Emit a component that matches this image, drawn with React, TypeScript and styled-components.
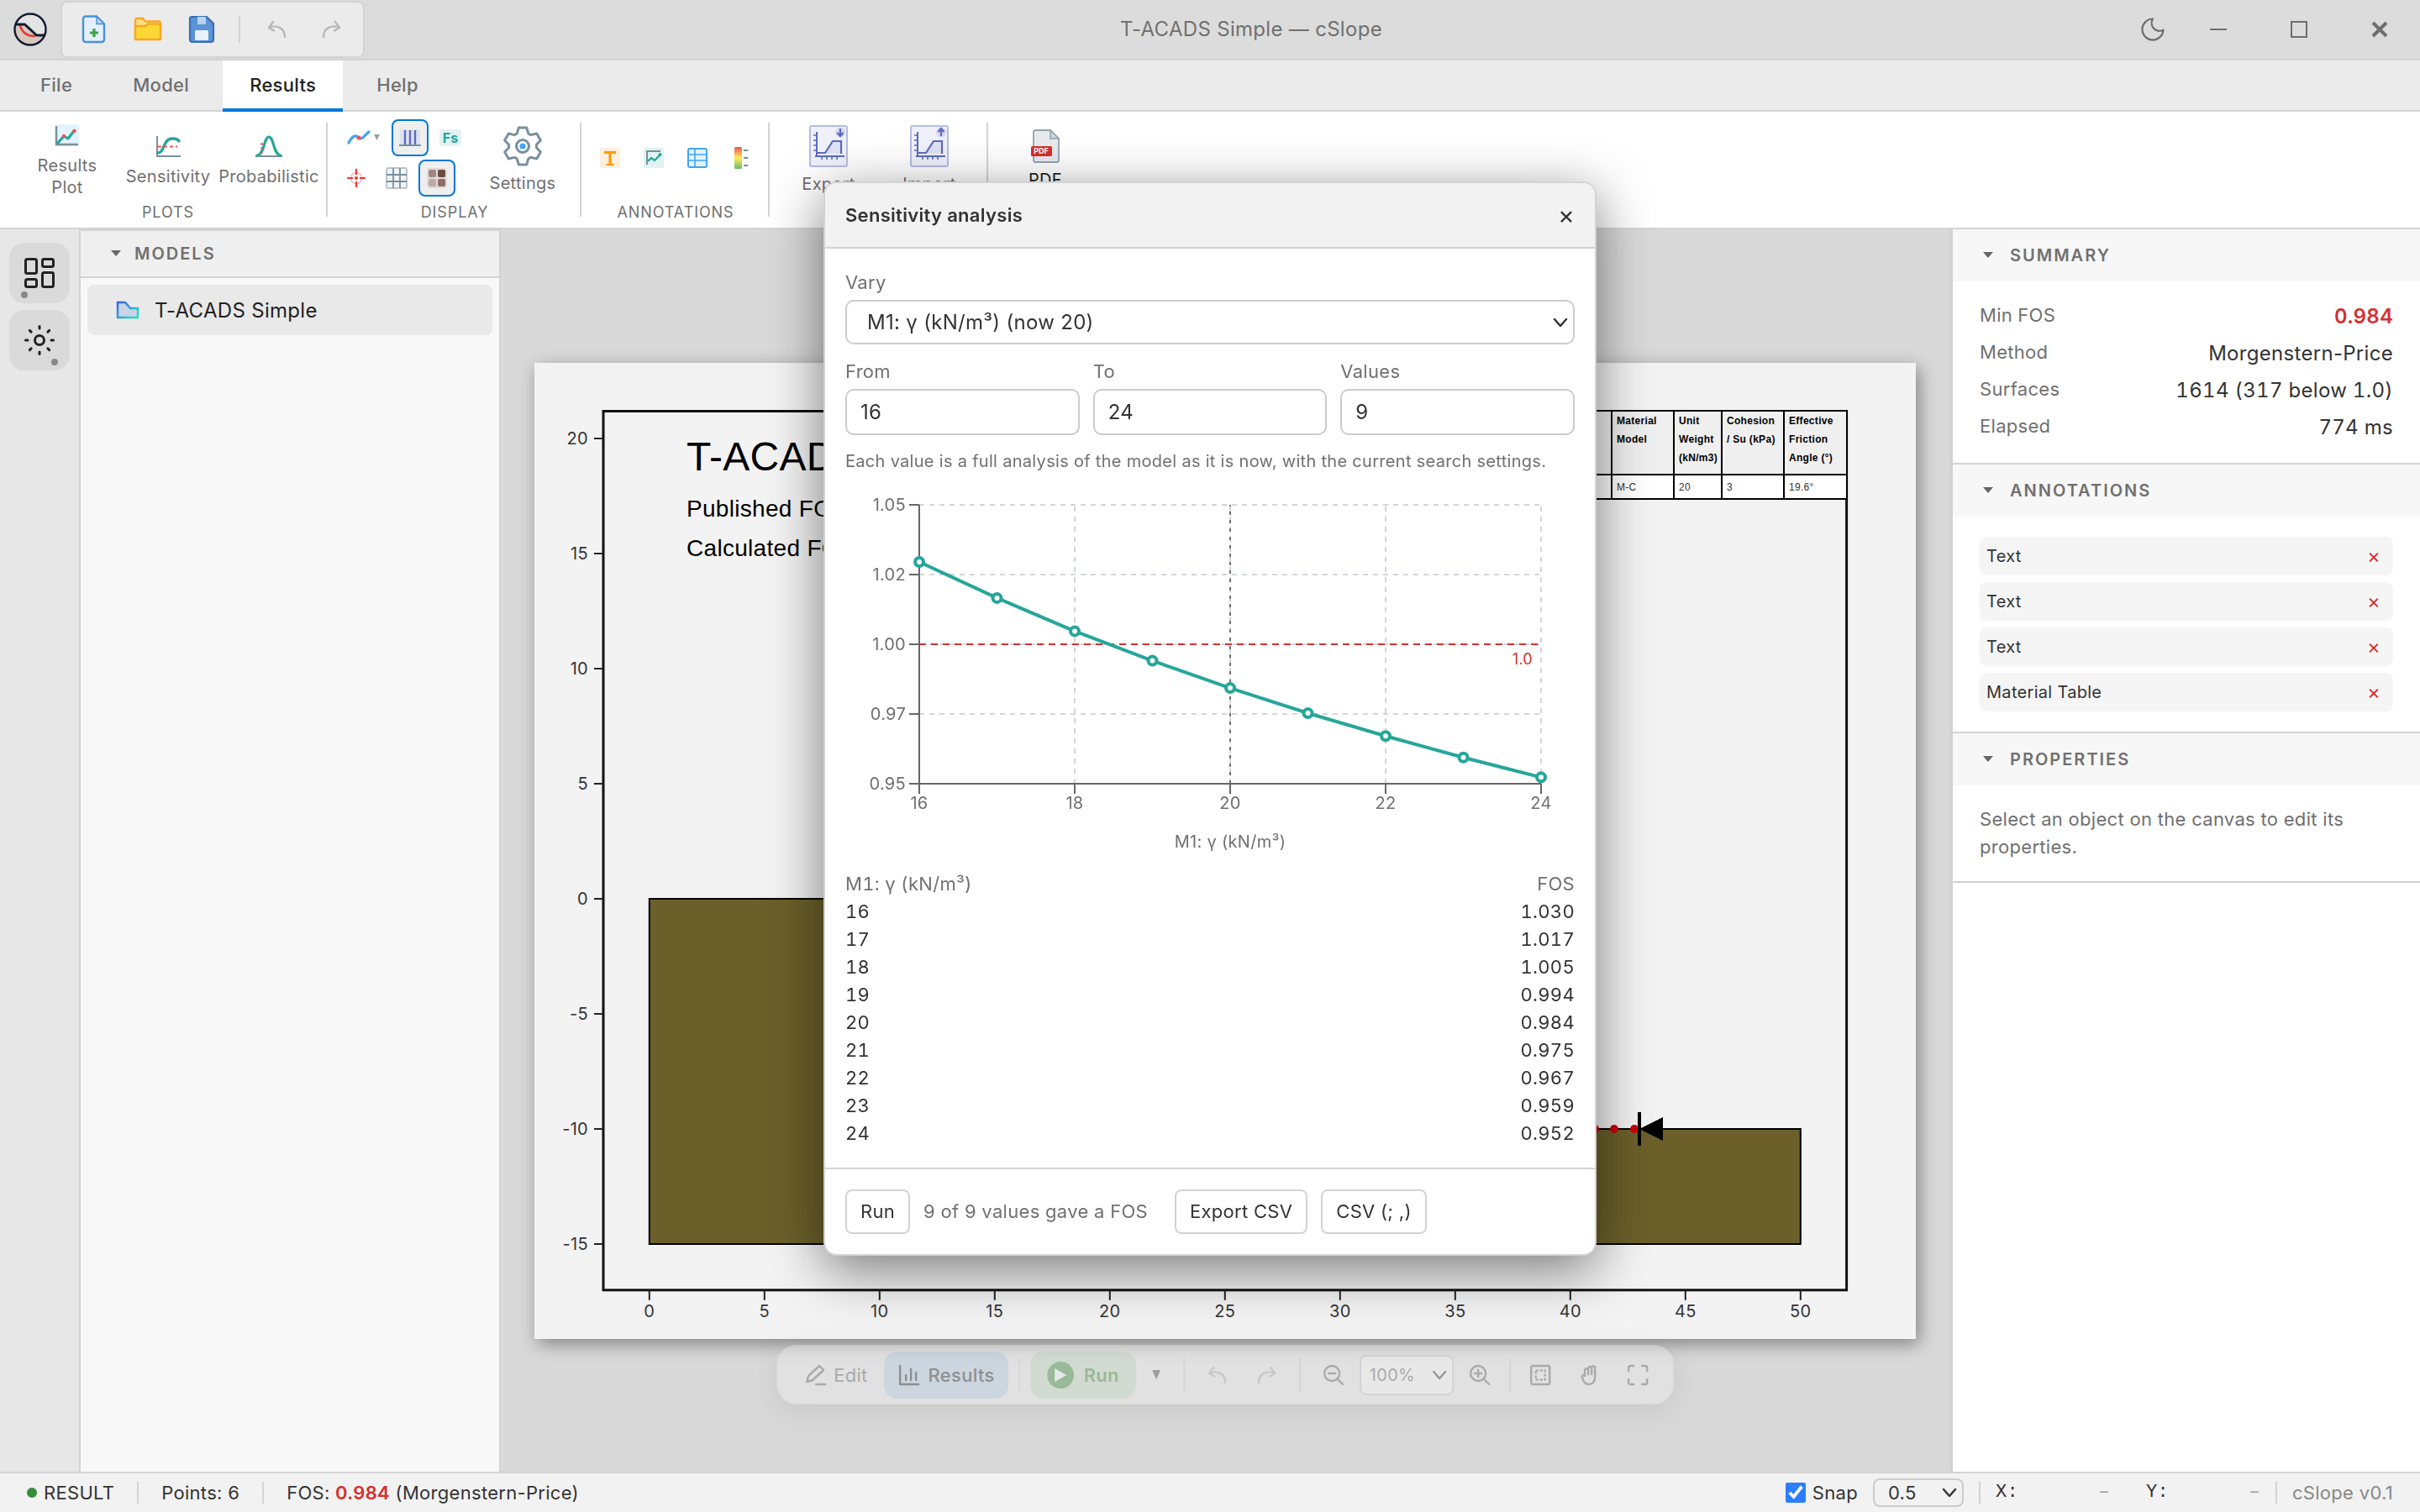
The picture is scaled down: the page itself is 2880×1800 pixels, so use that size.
import React, { ReactNode } from 'react';
import styled, { createGlobalStyle, css } from 'styled-components';

const c = {
  line: '#d3d3d3',
  text: '#333333',
  strong: '#222222',
  muted: '#707070',
  accent: '#0078d7',
  danger: '#d32f2f',
  teal: '#26a69a',
  indigo: '#5c6bc0',
  slate: '#78909c',
};

const GlobalStyle = createGlobalStyle`
  *, *::before, *::after { box-sizing: border-box; }
  body {
    margin: 0;
    font-family: Inter, "Noto Sans", sans-serif;
    font-size: 30px;
    letter-spacing: 0.01em;
    color: ${c.text};
    background: #d9d9d9;
  }
  button, input, select { font: inherit; letter-spacing: inherit; color: inherit; }
  button { padding: 0; border: 0; background: none; cursor: pointer; }
  svg { display: block; flex: none; }
  h1, h2, p, dl, dd, dt, ul { margin: 0; padding: 0; font-weight: 400; }
`;

const Page = styled.div`
  display: flex;
  flex-direction: column;
  min-height: 100vh;
`;

/* ---------- title bar ---------- */

const TitleBar = styled.header`
  display: flex;
  align-items: center;
  height: 72px;
  background: #dcdcdc;
  border-bottom: 2px solid ${c.line};
`;

const TitleLeft = styled.div`
  display: flex;
  align-items: center;
  gap: 16px;
  padding-left: 16px;
`;

const QuickBar = styled.div`
  display: flex;
  align-items: center;
  gap: 4px;
  height: 68px;
  padding: 0 8px;
  background: #ebebeb;
  border: 2px solid ${c.line};
  border-radius: 8px;
`;

const QuickButton = styled.button`
  display: grid;
  place-items: center;
  width: 60px;
  height: 56px;
  &:disabled { color: #b8b8b8; cursor: default; }
`;

const QuickDivider = styled.span`
  width: 2px;
  height: 32px;
  margin: 0 10px;
  background: ${c.line};
`;

const Title = styled.h1`
  flex: 1;
  font-size: 24px;
  line-height: 36px;
  text-align: center;
  color: ${c.muted};
`;

const WindowButtons = styled.div`
  display: flex;
  color: #6e6e6e;
`;

const WindowButton = styled.button<{ $narrow?: boolean }>`
  display: grid;
  place-items: center;
  width: 96px;
  height: 70px;
  ${(p) => p.$narrow && 'width: 36px; margin-right: 12px;'}
`;

/* ---------- menu tabs ---------- */

const Tabs = styled.nav`
  display: flex;
  gap: 8px;
  height: 61px;
  padding-left: 16px;
  background: #ebebeb;
  border-bottom: 2px solid ${c.line};
`;

const Tab = styled.button<{ $active?: boolean }>`
  height: 61px;
  padding: 0 32px;
  font-size: 22px;
  font-weight: 500;
  color: ${c.muted};
  border-bottom: 4px solid transparent;
  ${(p) =>
    p.$active &&
    css`
      color: ${c.strong};
      background: #ffffff;
      border-bottom-color: ${c.accent};
    `}
`;

/* ---------- ribbon ---------- */

const Ribbon = styled.div`
  display: flex;
  align-items: center;
  height: 140px;
  padding-left: 10px;
  background: #ffffff;
  border-bottom: 2px solid ${c.line};
`;

const RibbonGroup = styled.section`
  display: flex;
  flex-direction: column;
  height: 138px;
  padding: 8px 10px 5px 12px;
`;

const RibbonBody = styled.div<{ $gap?: number }>`
  display: flex;
  flex: 1;
  align-items: center;
  gap: ${(p) => p.$gap ?? 4}px;
`;

const RibbonLabel = styled.div`
  height: 27px;
  font-size: 18px;
  line-height: 27px;
  letter-spacing: 0.05em;
  text-align: center;
  color: ${c.muted};
`;

const RibbonDivider = styled.span`
  width: 2px;
  height: 112px;
  background: ${c.line};
`;

const RibbonButton = styled.button<{ $dark?: boolean }>`
  display: flex;
  flex-direction: column;
  align-items: center;
  gap: 7px;
  width: ${(p) => (p.$dark ? 112 : 116)}px;
  font-size: 20px;
  line-height: 26px;
  color: ${(p) => (p.$dark ? c.strong : c.muted)};
`;

const ButtonText = styled.span<{ $wrap?: boolean }>`
  ${(p) => p.$wrap && 'width: 80px;'}
`;

const ToggleRows = styled.div`
  display: flex;
  flex-direction: column;
  gap: 4px;
  padding-bottom: 4px;
`;

const ToggleRow = styled.div<{ $loose?: boolean }>`
  display: flex;
  gap: ${(p) => (p.$loose ? 8 : 4)}px;
`;

const ToolButton = styled.button<{ $active?: boolean; $wide?: boolean }>`
  display: flex;
  align-items: center;
  justify-content: center;
  gap: 4px;
  width: ${(p) => (p.$wide ? 60 : 44)}px;
  height: 44px;
  border: 2px solid transparent;
  border-radius: 8px;
  ${(p) =>
    p.$active &&
    css`
      background: #efefef;
      border-color: ${c.accent};
    `}
`;

/* ---------- body ---------- */

const Workspace = styled.div`
  display: flex;
  flex: 1;
`;

const Rail = styled.aside`
  display: flex;
  flex-direction: column;
  align-items: center;
  gap: 8px;
  width: 96px;
  padding-top: 16px;
  background: #e7e7e7;
  border-right: 2px solid ${c.line};
`;

const RailButton = styled.button<{ $dot: 'left' | 'right' }>`
  position: relative;
  display: grid;
  place-items: center;
  width: 72px;
  height: 72px;
  color: ${c.strong};
  background: #dadada;
  border-radius: 18px;
  &::after {
    content: '';
    position: absolute;
    bottom: 6px;
    ${(p) => p.$dot}: 14px;
    width: 8px;
    height: 8px;
    border-radius: 50%;
    background: #888888;
  }
`;

const ModelsPanel = styled.aside`
  width: 500px;
  background: #f8f8f8;
  border-top: 2px solid ${c.line};
  border-right: 2px solid ${c.line};
`;

const ModelsHeader = styled.button`
  display: flex;
  align-items: center;
  gap: 12px;
  width: 100%;
  padding: 12px 32px;
  font-size: 20px;
  font-weight: 600;
  line-height: 30px;
  letter-spacing: 2px;
  color: ${c.muted};
  background: #efefef;
  border-bottom: 2px solid ${c.line};
`;

const ModelsList = styled.ul`
  padding: 8px;
  list-style: none;
`;

const ModelItem = styled.button`
  display: flex;
  align-items: center;
  gap: 18px;
  width: 100%;
  height: 60px;
  padding: 0 34px;
  font-size: 24px;
  color: ${c.strong};
  background: #e9e9e9;
  border-radius: 8px;
`;

const CanvasArea = styled.main`
  position: relative;
  display: flex;
  flex: 1;
  align-items: center;
  min-width: 0;
  padding: 0 40px;
  background: #d9d9d9;
`;

const Sheet = styled.div`
  flex: 1;
  background: #f3f3f3;
  box-shadow: 4px 6px 20px rgba(0, 0, 0, 0.4);
  svg { width: 100%; height: auto; }
`;

const AxisText = styled.text`
  font-size: 20px;
  fill: #333333;
`;

const Note = styled.text<{ $large?: boolean }>`
  font-family: 'Liberation Sans', Arial, sans-serif;
  font-size: ${(p) => (p.$large ? 48 : 28)}px;
  fill: #000000;
`;

const MaterialTable = styled.table`
  width: 100%;
  border-collapse: collapse;
  table-layout: fixed;
  font-family: 'Liberation Sans', Arial, sans-serif;
  font-size: 12px;
  line-height: 22px;
  th, td { padding: 0 5px; border: 2px solid #000000; text-align: left; vertical-align: top; }
  th { height: 76px; color: #000000; background: #efefef; }
  td { height: 29px; padding-top: 3px; color: #333333; background: #ffffff; }
`;

/* ---------- floating toolbar ---------- */

const FloatBar = styled.div`
  position: absolute;
  left: 50%;
  bottom: 80px;
  display: flex;
  align-items: center;
  gap: 4px;
  height: 71px;
  padding: 0 14px;
  font-size: 22px;
  color: #666666;
  white-space: nowrap;
  background: #ededed;
  border: 2px solid #e6e6e6;
  border-radius: 24px;
  box-shadow: 0 8px 32px rgba(0, 0, 0, 0.2);
  opacity: 0.4;
  transform: translateX(-50%);
`;

const FloatButton = styled.button<{ $tone?: 'blue' | 'green' }>`
  display: flex;
  align-items: center;
  gap: 8px;
  height: 56px;
  padding: 0 16px;
  border-radius: 16px;
  ${(p) => p.$tone === 'blue' && 'color: #222222; background: #bad3ea; font-weight: 500;'}
  ${(p) => p.$tone === 'green' && 'color: #388e3c; background: #c9dfca; font-weight: 600; padding: 0 20px; gap: 12px;'}
`;

const FloatIconButton = styled.button<{ $small?: boolean; $faint?: boolean }>`
  display: grid;
  place-items: center;
  width: ${(p) => (p.$small ? 40 : 54)}px;
  height: 56px;
  ${(p) => p.$faint && 'color: #b0b0b0;'}
`;

const FloatDivider = styled.span<{ $tight?: boolean }>`
  width: 2px;
  height: 40px;
  margin: 0 ${(p) => (p.$tight ? 4 : 8)}px;
  background: ${c.line};
`;

/* ---------- drop-downs ---------- */

const SelectBox = styled.span<{ $kind: 'field' | 'status' | 'zoom' }>`
  display: inline-grid;
  align-items: center;
  > select, > svg { grid-area: 1 / 1; }
  > svg { justify-self: end; margin-right: 8px; pointer-events: none; }
  > select {
    width: 100%;
    appearance: none;
    border: 2px solid #cccccc;
    ${(p) =>
      p.$kind === 'field' &&
      'height: 53px; padding: 0 40px 0 24px; font-size: 24px; background: #ffffff; border-radius: 10px;'}
    ${(p) =>
      p.$kind === 'status' &&
      'width: 108px; height: 34px; padding: 0 32px 0 16px; font-size: 22px; line-height: 26px; background: #f2f2f2; border-radius: 8px;'}
    ${(p) =>
      p.$kind === 'zoom' &&
      'width: 112px; height: 48px; padding: 0 30px 0 10px; font-size: 20px; background: #ffffff; border-radius: 8px;'}
  }
`;

/* ---------- right panel ---------- */

const SidePanel = styled.aside`
  width: 560px;
  background: #ffffff;
  border-left: 4px solid ${c.line};
`;

const SideSection = styled.section`
  border-bottom: 2px solid ${c.line};
`;

const SideHeader = styled.button`
  display: flex;
  align-items: center;
  gap: 16px;
  width: 100%;
  padding: 16px 32px;
  font-size: 20px;
  font-weight: 600;
  line-height: 30px;
  letter-spacing: 2px;
  color: ${c.muted};
  background: #f7f7f7;
`;

const SideBody = styled.div`
  display: flex;
  flex-direction: column;
  gap: 8px;
  padding: 24px 32px;
`;

const Fact = styled.dl<{ $numeric?: boolean }>`
  display: flex;
  justify-content: space-between;
  font-size: 24px;
  line-height: 36px;
  ${(p) => p.$numeric && 'font-variant-numeric: tabular-nums;'}
  dt { font-size: 22px; line-height: 33px; color: ${c.muted}; }
`;

const Fos = styled.strong`
  font-weight: 600;
  color: ${c.danger};
`;

const AnnotationRow = styled.div`
  display: flex;
  align-items: center;
  justify-content: space-between;
  height: 46px;
  padding: 0 8px;
  font-size: 20px;
  background: #f5f5f5;
  border-radius: 8px;
`;

const RemoveButton = styled.button`
  width: 30px;
  height: 30px;
  font-size: 24px;
  line-height: 30px;
  color: ${c.danger};
`;

const Hint = styled.p<{ $small?: boolean }>`
  font-size: ${(p) => (p.$small ? 20 : 22)}px;
  line-height: ${(p) => (p.$small ? 30 : 33)}px;
  color: ${c.muted};
`;

/* ---------- status bar ---------- */

const StatusBar = styled.footer`
  display: flex;
  align-items: center;
  justify-content: space-between;
  height: 48px;
  padding: 0 32px;
  font-size: 22px;
  line-height: 26px;
  background: #f2f2f2;
  border-top: 2px solid ${c.line};
`;

const StatusGroup = styled.div<{ $gap: number }>`
  display: flex;
  align-items: center;
  gap: ${(p) => p.$gap}px;
`;

const StatusState = styled.span`
  display: flex;
  align-items: center;
  gap: 8px;
  &::before {
    content: '';
    width: 12px;
    height: 12px;
    border-radius: 50%;
    background: #388e3c;
  }
`;

const StatusDivider = styled.span`
  width: 2px;
  height: 26px;
  background: ${c.line};
`;

const SnapLabel = styled.label`
  display: flex;
  align-items: center;
  gap: 8px;
  input { width: 24px; height: 24px; margin: 0; accent-color: #2b7fff; }
`;

const Coordinate = styled.span`
  display: flex;
  justify-content: space-between;
  width: 136px;
  font-family: 'Liberation Mono', monospace;
  i { font-style: normal; color: #999999; }
`;

const Coordinates = styled.div`
  display: flex;
  gap: 43px;
`;

const Version = styled.span`
  color: #888888;
`;

/* ---------- dialog ---------- */

const Overlay = styled.div`
  position: fixed;
  inset: 0;
  display: flex;
  align-items: flex-start;
  justify-content: center;
  padding-top: 12vh;
`;

const Dialog = styled.div`
  width: 920px;
  max-width: 100%;
  overflow: hidden;
  background: #ffffff;
  border: 2px solid ${c.line};
  border-radius: 16px;
  box-shadow: 0 16px 64px rgba(0, 0, 0, 0.5);
`;

const DialogHeader = styled.div`
  display: flex;
  align-items: center;
  justify-content: space-between;
  height: 78px;
  padding: 0 24px;
  background: #f2f2f2;
  border-bottom: 2px solid ${c.line};
  h2 { font-size: 22px; font-weight: 600; }
`;

const CloseButton = styled.button`
  width: 20px;
  height: 40px;
  font-size: 30px;
  line-height: 40px;
`;

const DialogBody = styled.div`
  display: flex;
  flex-direction: column;
  gap: 16px;
  padding: 24px;
`;

const FieldRow = styled.div`
  display: grid;
  grid-template-columns: repeat(3, 1fr);
  gap: 16px;
`;

const Field = styled.label`
  display: grid;
  gap: 4px;
  min-width: 0;
  font-size: 22px;
  line-height: 33px;
  color: ${c.muted};
  input, select { color: ${c.text}; }
`;

const TextInput = styled.input`
  width: 100%;
  height: 55px;
  padding: 0 16px;
  font-size: 24px;
  background: #ffffff;
  border: 2px solid #cccccc;
  border-radius: 10px;
`;

const ChartBox = styled.div`
  svg { width: 100%; height: auto; }
`;

const ChartText = styled.text<{ $danger?: boolean }>`
  font-size: ${(p) => (p.$danger ? 18 : 20)}px;
  fill: ${(p) => (p.$danger ? c.danger : c.muted)};
`;

const ResultTable = styled.table`
  width: 100%;
  border-collapse: collapse;
  font-size: 22px;
  line-height: 33px;
  font-variant-numeric: tabular-nums;
  th, td { padding: 0; text-align: left; }
  th { font-weight: 400; color: ${c.muted}; }
  th:last-child, td:last-child { text-align: right; }
`;

const DialogFooter = styled.div`
  display: flex;
  align-items: center;
  gap: 16px;
  padding: 24px;
  font-size: 22px;
  line-height: 33px;
  border-top: 2px solid ${c.line};
`;

const FooterButton = styled.button`
  padding: 8px 16px;
  background: #ffffff;
  border: 2px solid ${c.line};
  border-radius: 8px;
`;

const FooterStatus = styled.span`
  margin-right: 16px;
  color: ${c.muted};
`;

/* ---------- icons ---------- */

const Logo = () => (
  <svg width="40" height="42" viewBox="1 0 40 42" fill="none">
    <clipPath id="logo-disc"><circle cx="21" cy="21" r="19" /></clipPath>
    <circle cx="21" cy="21" r="18.500" fill="#e4e4e4" />
    <path clipPath="url(#logo-disc)" d="M0 15H14L29 28H42V42H0Z" fill="#d7c8bf" />
    <path d="M9 16C11 25 17 29 27 29" stroke="#e53935" strokeWidth="2.6" />
    <path d="M3 15H14.500L28.500 28H39" stroke="#111a2e" strokeWidth="3" strokeLinejoin="round" />
    <circle cx="21" cy="21" r="18.500" stroke="#111a2e" strokeWidth="2.4" />
  </svg>
);

const NewFileIcon = () => (
  <svg width="30" height="36" viewBox="0 0 30 36">
    <path d="M5 2.500H18L27 11.500V30A3 3 0 0 1 24 33H5A3 3 0 0 1 2 30V5.500A3 3 0 0 1 5 2.500Z" fill="#e3f0fc" stroke="#4a90d9" strokeWidth="2.400" />
    <path d="M18 2.500V11.500H27Z" fill="#bcd9f5" stroke="#4a90d9" strokeWidth="1.500" />
    <path d="M15 17V27M10 22H20" stroke="#43a047" strokeWidth="3.200" />
  </svg>
);

const FolderIcon = () => (
  <svg width="36" height="32" viewBox="0 0 36 32">
    <path d="M3 5A2 2 0 0 1 5 3H12L15 6.500H31A2 2 0 0 1 33 8.500V27H3Z" fill="#ffe082" stroke="#f9a825" strokeWidth="2.400" />
    <path d="M3 12H15L18 9.500H33V28H3Z" fill="#fdd835" stroke="#f9a825" strokeWidth="2.400" strokeLinejoin="round" />
  </svg>
);

const SaveIcon = () => (
  <svg width="32" height="34" viewBox="0 0 32 34">
    <path d="M4 2H22L30 10V29A3 3 0 0 1 27 32H5A3 3 0 0 1 2 29V4A2 2 0 0 1 4 2Z" fill="#5b93d6" stroke="#3a6fb0" strokeWidth="2.200" />
    <rect x="11" y="2" width="10" height="9" fill="#b9d3f2" />
    <rect x="8" y="18" width="16" height="12" rx="1.500" fill="#e8f0fb" />
  </svg>
);

const UndoIcon = ({ flip }: { flip?: boolean }) => (
  <svg width="26" height="26" viewBox="0 0 26 26" fill="none" stroke="currentColor" strokeWidth="2.400" strokeLinecap="round" strokeLinejoin="round">
    <g transform={flip ? 'matrix(-1 0 0 1 26 0)' : undefined}>
      <path d="M8 4L3 11L9 14.500" />
      <path d="M3 11C12 7 22 11 22 22" />
    </g>
  </svg>
);

const MoonIcon = () => (
  <svg width="30" height="30" viewBox="0 0 24 24" fill="none" stroke="currentColor" strokeWidth="1.800" strokeLinejoin="round" strokeLinecap="round">
    <path d="M12 2.500A7.500 7.500 0 0 0 22 13A10 10 0 1 1 12 2.500Z" transform="translate(0 -.5)" />
  </svg>
);

const MinimizeIcon = () => (
  <svg width="20" height="20" viewBox="0 0 20 20" stroke="currentColor" strokeWidth="2"><path d="M0 10H20" /></svg>
);
const MaximizeIcon = () => (
  <svg width="20" height="20" viewBox="0 0 20 20" fill="none" stroke="currentColor" strokeWidth="2"><rect x="1" y="1" width="18" height="18" /></svg>
);
const CrossIcon = () => (
  <svg width="20" height="20" viewBox="0 0 20 20" stroke="currentColor" strokeWidth="4"><path d="M2 2L18 18M18 2L2 18" /></svg>
);

const ResultsPlotIcon = () => (
  <svg width="32" height="32" viewBox="0 0 32 32" fill="none">
    <rect x="2" y="3" width="28" height="26" rx="2" fill="#e3f2fd" />
    <path d="M3 5V27H29" stroke={c.slate} strokeWidth="2.400" />
    <path d="M5 25L12 17L17 20L24 11" stroke={c.teal} strokeWidth="3.200" strokeLinecap="round" strokeLinejoin="round" />
    <circle cx="12" cy="17" r="2.200" fill="#ef5350" />
    <circle cx="24.500" cy="11" r="2.200" fill="#ef5350" />
  </svg>
);

const SensitivityIcon = () => (
  <svg width="32" height="32" viewBox="0 0 32 32" fill="none">
    <path d="M3 4V28H31" stroke={c.slate} strokeWidth="2" />
    <path d="M5 24C12 23 10 7 21 7C25 7 28 8 29 10" stroke={c.teal} strokeWidth="3.400" strokeLinecap="round" />
    <path d="M4 16.500H27" stroke="#ef5350" strokeWidth="2" strokeDasharray="4 3" />
  </svg>
);

const ProbabilityIcon = () => (
  <svg width="32" height="32" viewBox="0 0 32 32" fill="none">
    <path d="M0 28H32" stroke={c.slate} strokeWidth="2" />
    <path d="M2 27C11 26 10 5 16 5C22 5 21 26 30 27" stroke={c.teal} strokeWidth="3.200" strokeLinecap="round" />
    <path d="M7.500 12V28" stroke="#ef5350" strokeWidth="2" strokeDasharray="3 2" />
  </svg>
);

const CurveIcon = () => (
  <svg width="28" height="20" viewBox="0 0 28 20" fill="none">
    <path d="M2 16C7 6 11 7 14 10C18 13 21 7 26 3" stroke="#42a5f5" strokeWidth="3.200" strokeLinecap="round" />
    <circle cx="14" cy="10" r="2.600" fill="#ef5350" />
  </svg>
);

const SmallCaret = () => (
  <svg width="7" height="8" viewBox="0 0 7 8"><path d="M0 0H7L3.500 7Z" fill="#9e9e9e" /></svg>
);

const SlicesIcon = () => (
  <svg width="26" height="26" viewBox="0 0 26 26" fill="none">
    <rect x="1" y="3" width="24" height="19" rx="2" fill="#dfe1ee" />
    <path d="M7 4V21M13 4V21M19 4V21" stroke={c.indigo} strokeWidth="2.400" />
    <path d="M0 22H26" stroke={c.slate} strokeWidth="2" />
  </svg>
);

const FsBadge = styled.span`
  width: 26px;
  font-size: 16px;
  font-weight: 700;
  line-height: 20px;
  text-align: center;
  letter-spacing: 0;
  color: ${c.teal};
  background: #e0f2f1;
  border-radius: 3px;
`;

const TargetIcon = () => (
  <svg width="24" height="24" viewBox="0 0 24 24" fill="none">
    <circle cx="12" cy="12" r="6.500" stroke="#f8c4c4" strokeWidth="2" />
    <path d="M12 1V8M12 16V23M1 12H8M16 12H23" stroke="#e53935" strokeWidth="2.200" />
    <circle cx="12" cy="12" r="2" fill="#e53935" />
  </svg>
);

const GridIcon = () => (
  <svg width="26" height="26" viewBox="0 0 26 26" fill="none">
    <rect x="1" y="1" width="24" height="24" rx="2" fill="#f1f4f6" stroke="#b9c5cb" strokeWidth="2" />
    <path d="M9 1V25M17 1V25M1 9H25M1 17H25" stroke={c.slate} strokeWidth="1.800" />
  </svg>
);

const MaterialsIcon = () => (
  <svg width="26" height="26" viewBox="0 0 26 26">
    <rect x="1" y="1" width="24" height="24" rx="3" fill="#e0dcdb" />
    <rect x="3" y="3" width="9" height="9" rx="2" fill="#a1887f" />
    <rect x="14" y="3" width="9" height="9" rx="2" fill="#6d4c41" />
    <rect x="3" y="14" width="9" height="9" rx="2" fill="#bcaaa4" />
    <rect x="14" y="14" width="9" height="9" rx="2" fill="#8d6e63" />
  </svg>
);

const gearPath = [0, 60, 120, 180, 240, 300]
  .flatMap((tooth) =>
    ([[16.5, -24], [22.5, -12], [22.5, 12], [16.5, 24]] as const).map(([r, offset]) => {
      const a = ((tooth + offset - 90) * Math.PI) / 180;
      return `${(24 + r * Math.cos(a)).toFixed(2)} ${(24 + r * Math.sin(a)).toFixed(2)}`;
    })
  )
  .join('L');

const GearIcon = () => (
  <svg width="48" height="48" viewBox="0 0 48 48" fill="none">
    <path d={`M${gearPath}Z`} stroke={c.slate} strokeWidth="3" strokeLinejoin="round" />
    <circle cx="24" cy="24" r="7.500" stroke={c.slate} strokeWidth="3" />
    <circle cx="24" cy="24" r="3.600" fill="#42a5f5" />
  </svg>
);

const TextIcon = () => (
  <svg width="24" height="24" viewBox="0 0 24 24" fill="none" stroke="#ff9800">
    <rect width="24" height="24" rx="2" fill="#fff0dc" stroke="none" />
    <path d="M5 5.500H19M12 5V20" strokeWidth="3" />
    <path d="M7.500 20H16.500" strokeWidth="2" />
  </svg>
);

const PlotNoteIcon = () => (
  <svg width="24" height="24" viewBox="0 0 24 24" fill="none">
    <rect width="24" height="24" rx="2" fill="#e0f2f1" />
    <path d="M4 20V4H20" stroke={c.slate} strokeWidth="2" />
    <path d="M5 16L9 12L13 15L20 8" stroke={c.teal} strokeWidth="2.400" />
    <circle cx="19.500" cy="8" r="2" fill={c.teal} />
  </svg>
);

const TableIcon = () => (
  <svg width="24" height="24" viewBox="0 0 24 24" fill="none" stroke="#42a5f5" strokeWidth="2">
    <rect x="1" y="1" width="22" height="22" rx="2" fill="#e3f2fd" />
    <path d="M1 8H23M1 15H23M9 1V23" strokeWidth="1.600" />
  </svg>
);

const LegendIcon = () => (
  <svg width="20" height="26" viewBox="0 0 20 26">
    <linearGradient id="legend-ramp" x1="0" y1="0" x2="0" y2="1">
      <stop offset="0" stopColor="#ef5350" />
      <stop offset=".5" stopColor="#ffee58" />
      <stop offset="1" stopColor="#66bb6a" />
    </linearGradient>
    <rect x="2" y="0" width="9" height="26" rx="1.500" fill="url(#legend-ramp)" />
    <path d="M13 4H18M13 13H18M13 22H18" stroke={c.slate} strokeWidth="1.800" />
  </svg>
);

const TransferIcon = ({ up }: { up?: boolean }) => (
  <svg width="46" height="50" viewBox="0 0 46 50" fill="none" stroke={c.indigo}>
    <rect x="1" y="1" width="44" height="48" rx="2" fill="#f0f1fa" stroke="#b4bce4" strokeWidth="2" />
    <path d="M9 33H19L28 19H38V34" fill="#dfe2f3" stroke="none" />
    <path d="M9 8V38M7 37H42" strokeWidth="2" />
    <path d="M5 12H9M5 18H9M5 24H9M5 30H9M15 37V41M21 37V41M27 37V41M33 37V41" strokeWidth="1.600" />
    <path d="M9 33H19L28 19H38V34" strokeWidth="2.200" />
    <circle cx="37" cy="8.500" r="6" fill="#d5d8ef" stroke="none" />
    <path d={up ? 'M37 13V4M33.500 8L37 4L40.500 8' : 'M37 4V13M33.500 9L37 13L40.500 9'} strokeWidth="2.200" />
  </svg>
);

const PdfBadge = styled.text`
  font-size: 9px;
  font-weight: 700;
  letter-spacing: 0;
  fill: #ffffff;
`;

const PdfIcon = () => (
  <svg width="34" height="40" viewBox="0 0 34 40">
    <path d="M5 1H23L33 11V37A2 2 0 0 1 31 39H5A2 2 0 0 1 3 37V3A2 2 0 0 1 5 1Z" fill="#e8eaed" stroke="#90a4ae" strokeWidth="1.800" />
    <path d="M23 1V11H33Z" fill="#cfd8dc" stroke="#90a4ae" strokeWidth="1.500" />
    <rect x="0" y="20" width="25" height="12" rx="1.500" fill="#d32f2f" />
    <PdfBadge x="12" y="29" textAnchor="middle">PDF</PdfBadge>
  </svg>
);

const DashboardIcon = () => (
  <svg width="36" height="36" viewBox="0 0 36 36" fill="none" stroke="currentColor" strokeWidth="3">
    <rect x="1.500" y="1.500" width="13" height="17" rx="2" />
    <rect x="21.500" y="1.500" width="13" height="9" rx="2" />
    <rect x="21.500" y="17.500" width="13" height="17" rx="2" />
    <rect x="1.500" y="25.500" width="13" height="9" rx="2" />
  </svg>
);

const SunIcon = () => (
  <svg width="36" height="36" viewBox="0 0 36 36" fill="none" stroke="currentColor" strokeWidth="3" strokeLinecap="round">
    <circle cx="18" cy="18" r="5.500" />
    {[0, 45, 90, 135, 180, 225, 270, 315].map((a) => (
      <path key={a} d="M18 1.500V4" transform={`rotate(${a} 18 18)`} />
    ))}
  </svg>
);

const ModelIcon = () => (
  <svg width="28" height="24" viewBox="0 0 28 24">
    <linearGradient id="model-stroke" x1="0" y1="0" x2="1" y2="1">
      <stop offset="0" stopColor="#3d5afe" />
      <stop offset="1" stopColor="#1de9b6" />
    </linearGradient>
    <path d="M2 3H11L17 10H26V21H2Z" fill="#c8d5e6" stroke="url(#model-stroke)" strokeWidth="2.400" />
  </svg>
);

const Triangle = () => (
  <svg width="20" height="20" viewBox="0 0 20 20"><path d="M4 6H16L10 13Z" fill="#666666" /></svg>
);

const Chevron = () => (
  <svg width="18" height="12" viewBox="0 0 18 12" fill="none" stroke="#333333" strokeWidth="2.400" strokeLinecap="round" strokeLinejoin="round">
    <path d="M2 2L9 10L16 2" />
  </svg>
);

const ToolIcon = ({ children }: { children: ReactNode }) => (
  <svg width="28" height="28" viewBox="0 0 28 28" fill="none" stroke="currentColor" strokeWidth="2.400" strokeLinecap="round" strokeLinejoin="round">
    {children}
  </svg>
);

const PlayIcon = () => (
  <svg width="32" height="32" viewBox="0 0 32 32">
    <circle cx="16" cy="16" r="16" fill="#388e3c" />
    <path d="M9 8L23 16L9 24Z" fill="#ffffff" />
  </svg>
);

/* ---------- drawing ---------- */

const UNIT = 27.4;
const TOP = 57.5;
const px = (x: number) => 136.8 + x * UNIT;
const py = (y: number) => 638 - y * UNIT;

const SlopeDrawing = () => (
  <svg viewBox="0 0 1644 1162" role="img" aria-label="Slope model">
    <rect x={px(-2)} y={TOP} width={px(52) - px(-2)} height={py(-17) - TOP} fill="none" stroke="#111111" strokeWidth="3" />
    {[20, 15, 10, 5, 0, -5, -10, -15].map((v) => (
      <g key={v}>
        <path d={`M${px(-2) - 11} ${py(v)}H${px(-2)}`} stroke="#222222" strokeWidth="2" />
        <AxisText x={64} y={py(v) + 7} textAnchor="end">{v}</AxisText>
      </g>
    ))}
    {[0, 5, 10, 15, 20, 25, 30, 35, 40, 45, 50].map((v) => (
      <g key={v}>
        <path d={`M${px(v)} ${py(-17)}V${py(-17) + 12}`} stroke="#222222" strokeWidth="2" />
        <AxisText x={px(v)} y={1136} textAnchor="middle">{v}</AxisText>
      </g>
    ))}
    <path
      d={`M${px(0)} ${py(0)}H${px(20)}L${px(40)} ${py(-10)}H${px(50)}V${py(-15)}H${px(0)}Z`}
      fill="#6b602a"
      stroke="#000000"
      strokeWidth="2"
    />
    {[1217, 1241, 1262, 1285, 1309].map((x) => (
      <circle key={x} cx={x} cy={py(-10)} r="5" fill="#c8000d" />
    ))}
    <path d="M1315 892V932" stroke="#000000" strokeWidth="4" />
    <path d="M1315 912L1343 898V926Z" fill="#000000" />
    <Note x="181" y="128" $large>T-ACADS Simple</Note>
    <Note x="181" y="183">Published FOS</Note>
    <Note x="181" y="230">Calculated FOS</Note>
    <foreignObject x="1161" y="56" width="402" height="110">
      <MaterialTable>
        <colgroup>
          <col />
          <col style={{ width: '74px' }} />
          <col style={{ width: '57px' }} />
          <col style={{ width: '74px' }} />
          <col style={{ width: '75px' }} />
        </colgroup>
        <thead>
          <tr>
            <th>Material Name</th>
            <th>Material<br />Model</th>
            <th>Unit<br />Weight<br />(kN/m3)</th>
            <th>Cohesion<br />/ Su (kPa)</th>
            <th>Effective<br />Friction<br />Angle (°)</th>
          </tr>
        </thead>
        <tbody>
          <tr><td>M1</td><td>M-C</td><td>20</td><td>3</td><td>19.6°</td></tr>
        </tbody>
      </MaterialTable>
    </foreignObject>
  </svg>
);

/* ---------- sensitivity chart ---------- */

const results = [
  [16, 1.0295, '1.030'],
  [17, 1.0166, '1.017'],
  [18, 1.0047, '1.005'],
  [19, 0.9941, '0.994'],
  [20, 0.9843, '0.984'],
  [21, 0.9753, '0.975'],
  [22, 0.9671, '0.967'],
  [23, 0.9594, '0.959'],
  [24, 0.9523, '0.952'],
] as const;

const cx = (v: number) => 88 + ((v - 16) / 8) * 740;
const cy = (v: number) => 21 + ((1.05 - v) / 0.1) * 332;

const SensitivityChart = () => (
  <svg viewBox="0 0 868 440" role="img" aria-label="FOS against unit weight">
    <g stroke="#d1d5db" strokeWidth="2" strokeDasharray="6 6">
      {[0, 1, 2, 3].map((i) => <path key={i} d={`M88 ${21 + i * 83}H828`} />)}
      {[18, 20, 22, 24].map((v) => <path key={v} d={`M${cx(v)} 353V21`} />)}
    </g>
    <g stroke="#666666" strokeWidth="2">
      <path d="M88 21V353M88 353H828" />
      {[0, 1, 2, 3, 4].map((i) => <path key={i} d={`M76 ${21 + i * 83}H88`} />)}
      {[16, 18, 20, 22, 24].map((v) => <path key={v} d={`M${cx(v)} 353V365`} />)}
    </g>
    {['1.05', '1.02', '1.00', '0.97', '0.95'].map((t, i) => (
      <ChartText key={t} x="72" y={28 + i * 83} textAnchor="end">{t}</ChartText>
    ))}
    {[16, 18, 20, 22, 24].map((v) => (
      <ChartText key={v} x={cx(v)} y="383" textAnchor="middle">{v}</ChartText>
    ))}
    <ChartText x="458" y="429" textAnchor="middle">M1: γ (kN/m³)</ChartText>
    <path d={`M88 ${cy(1)}H828`} stroke={c.danger} strokeWidth="2" strokeDasharray="8 6" />
    <path d={`M${cx(20)} 21V353`} stroke="#707070" strokeWidth="2" strokeDasharray="4 6" strokeDashoffset="2" />
    <ChartText $danger x="818" y="211" textAnchor="end">1.0</ChartText>
    <path d={'M' + results.map(([x, y]) => `${cx(x)} ${cy(y)}`).join('L')} fill="none" stroke={c.teal} strokeWidth="4" strokeLinejoin="round" />
    {results.map(([x, y]) => (
      <circle key={x} cx={cx(x)} cy={cy(y)} r="5" fill="#ffffff" stroke={c.teal} strokeWidth="4" />
    ))}
  </svg>
);

export default function App() {
  return (
    <Page>
      <GlobalStyle />
      <TitleBar>
        <TitleLeft>
          <Logo />
          <QuickBar>
            <QuickButton aria-label="New"><NewFileIcon /></QuickButton>
            <QuickButton aria-label="Open"><FolderIcon /></QuickButton>
            <QuickButton aria-label="Save"><SaveIcon /></QuickButton>
            <QuickDivider />
            <QuickButton aria-label="Undo" disabled><UndoIcon /></QuickButton>
            <QuickButton aria-label="Redo" disabled><UndoIcon flip /></QuickButton>
          </QuickBar>
        </TitleLeft>
        <Title>T-ACADS Simple — cSlope</Title>
        <WindowButtons>
          <WindowButton $narrow aria-label="Dark theme"><MoonIcon /></WindowButton>
          <WindowButton aria-label="Minimize"><MinimizeIcon /></WindowButton>
          <WindowButton aria-label="Maximize"><MaximizeIcon /></WindowButton>
          <WindowButton aria-label="Close window"><CrossIcon /></WindowButton>
        </WindowButtons>
      </TitleBar>

      <Tabs>
        <Tab>File</Tab>
        <Tab>Model</Tab>
        <Tab $active>Results</Tab>
        <Tab>Help</Tab>
      </Tabs>

      <Ribbon>
        <RibbonGroup>
          <RibbonBody>
            <RibbonButton><ResultsPlotIcon /><ButtonText $wrap>Results Plot</ButtonText></RibbonButton>
            <RibbonButton><SensitivityIcon /><ButtonText>Sensitivity</ButtonText></RibbonButton>
            <RibbonButton><ProbabilityIcon /><ButtonText>Probabilistic</ButtonText></RibbonButton>
          </RibbonBody>
          <RibbonLabel>PLOTS</RibbonLabel>
        </RibbonGroup>
        <RibbonDivider />
        <RibbonGroup>
          <RibbonBody $gap={6}>
            <ToggleRows>
              <ToggleRow>
                <ToolButton $wide aria-label="Slip surfaces"><CurveIcon /><SmallCaret /></ToolButton>
                <ToolButton $active aria-label="Slices"><SlicesIcon /></ToolButton>
                <ToolButton><FsBadge>Fs</FsBadge></ToolButton>
              </ToggleRow>
              <ToggleRow>
                <ToolButton aria-label="Centre point"><TargetIcon /></ToolButton>
                <ToolButton aria-label="Grid"><GridIcon /></ToolButton>
                <ToolButton $active aria-label="Materials"><MaterialsIcon /></ToolButton>
              </ToggleRow>
            </ToggleRows>
            <RibbonButton><GearIcon /><ButtonText>Settings</ButtonText></RibbonButton>
          </RibbonBody>
          <RibbonLabel>DISPLAY</RibbonLabel>
        </RibbonGroup>
        <RibbonDivider />
        <RibbonGroup>
          <RibbonBody>
            <ToggleRows>
              <ToggleRow $loose>
                <ToolButton aria-label="Text"><TextIcon /></ToolButton>
                <ToolButton aria-label="Plot"><PlotNoteIcon /></ToolButton>
                <ToolButton aria-label="Table"><TableIcon /></ToolButton>
                <ToolButton aria-label="Legend"><LegendIcon /></ToolButton>
              </ToggleRow>
            </ToggleRows>
          </RibbonBody>
          <RibbonLabel>ANNOTATIONS</RibbonLabel>
        </RibbonGroup>
        <RibbonDivider />
        <RibbonGroup>
          <RibbonBody>
            <RibbonButton><TransferIcon /><ButtonText>Export</ButtonText></RibbonButton>
            <RibbonButton><TransferIcon up /><ButtonText>Import</ButtonText></RibbonButton>
          </RibbonBody>
          <RibbonLabel />
        </RibbonGroup>
        <RibbonDivider />
        <RibbonGroup>
          <RibbonBody>
            <RibbonButton $dark><PdfIcon /><ButtonText>PDF</ButtonText></RibbonButton>
          </RibbonBody>
          <RibbonLabel />
        </RibbonGroup>
      </Ribbon>

      <Workspace>
        <Rail>
          <RailButton $dot="left" aria-label="Panels"><DashboardIcon /></RailButton>
          <RailButton $dot="right" aria-label="Appearance"><SunIcon /></RailButton>
        </Rail>
        <ModelsPanel>
          <ModelsHeader><Triangle />MODELS</ModelsHeader>
          <ModelsList>
            <li><ModelItem><ModelIcon />T-ACADS Simple</ModelItem></li>
          </ModelsList>
        </ModelsPanel>

        <CanvasArea>
          <Sheet><SlopeDrawing /></Sheet>
          <FloatBar>
            <FloatButton>
              <ToolIcon><path d="M4 22L6 15L19 3L24 8L11 20ZM15 25H26" /></ToolIcon>
              Edit
            </FloatButton>
            <FloatButton $tone="blue">
              <ToolIcon><path d="M3 3V25H25M10 20V14M16 20V7M22 20V11" /></ToolIcon>
              Results
            </FloatButton>
            <FloatDivider />
            <FloatButton $tone="green"><PlayIcon />Run</FloatButton>
            <FloatIconButton $small aria-label="Run options">
              <svg width="10" height="11" viewBox="0 0 10 11"><path d="M0 0H10L5 11Z" fill="#444444" /></svg>
            </FloatIconButton>
            <FloatDivider />
            <FloatIconButton $faint aria-label="Undo edit"><UndoIcon /></FloatIconButton>
            <FloatIconButton $faint aria-label="Redo edit"><UndoIcon flip /></FloatIconButton>
            <FloatDivider />
            <FloatIconButton aria-label="Zoom out">
              <ToolIcon><circle cx="12" cy="12" r="9" /><path d="M19 19L25 25M8 12H16" /></ToolIcon>
            </FloatIconButton>
            <SelectBox $kind="zoom">
              <select aria-label="Zoom level" defaultValue="100%"><option>100%</option></select>
              <Chevron />
            </SelectBox>
            <FloatIconButton aria-label="Zoom in">
              <ToolIcon><circle cx="12" cy="12" r="9" /><path d="M19 19L25 25M8 12H16M12 8V16" /></ToolIcon>
            </FloatIconButton>
            <FloatDivider $tight />
            <FloatIconButton aria-label="Fit">
              <ToolIcon><rect x="3" y="3" width="22" height="22" rx="2" /><rect x="8.500" y="8.500" width="11" height="11" strokeDasharray="3 2" strokeLinecap="butt" /></ToolIcon>
            </FloatIconButton>
            <FloatIconButton aria-label="Pan">
              <ToolIcon><path d="M9 15V9A2 2 0 0 1 13 8V13V6A2 2 0 0 1 17 6V13V5A2 2 0 0 1 21 6V15C21 22 18 25 14 25C9 25 7 22 6 17C5 14 8 13 9 15Z" /></ToolIcon>
            </FloatIconButton>
            <FloatIconButton aria-label="Full screen">
              <ToolIcon><path d="M3 9V5A2 2 0 0 1 5 3H9M19 3H23A2 2 0 0 1 25 5V9M25 19V23A2 2 0 0 1 23 25H19M9 25H5A2 2 0 0 1 3 23V19" /></ToolIcon>
            </FloatIconButton>
          </FloatBar>
        </CanvasArea>

        <SidePanel>
          <SideSection>
            <SideHeader><Triangle />SUMMARY</SideHeader>
            <SideBody>
              <Fact $numeric><dt>Min FOS</dt><dd><Fos>0.984</Fos></dd></Fact>
              <Fact><dt>Method</dt><dd>Morgenstern-Price</dd></Fact>
              <Fact $numeric><dt>Surfaces</dt><dd>1614 (317 below 1.0)</dd></Fact>
              <Fact $numeric><dt>Elapsed</dt><dd>774 ms</dd></Fact>
            </SideBody>
          </SideSection>
          <SideSection>
            <SideHeader><Triangle />ANNOTATIONS</SideHeader>
            <SideBody>
              {['Text', 'Text', 'Text', 'Material Table'].map((name, i) => (
                <AnnotationRow key={i}>
                  {name}
                  <RemoveButton aria-label={`Remove ${name}`}>×</RemoveButton>
                </AnnotationRow>
              ))}
            </SideBody>
          </SideSection>
          <SideSection>
            <SideHeader><Triangle />PROPERTIES</SideHeader>
            <SideBody>
              <Hint>Select an object on the canvas to edit its properties.</Hint>
            </SideBody>
          </SideSection>
        </SidePanel>
      </Workspace>

      <StatusBar>
        <StatusGroup $gap={27}>
          <StatusState>RESULT</StatusState>
          <StatusDivider />
          <span>Points: 6</span>
          <StatusDivider />
          <span>FOS: <Fos>0.984</Fos> (Morgenstern-Price)</span>
        </StatusGroup>
        <StatusGroup $gap={18}>
          <SnapLabel><input type="checkbox" defaultChecked />Snap</SnapLabel>
          <SelectBox $kind="status">
            <select aria-label="Snap spacing" defaultValue="0.5"><option>0.5</option></select>
            <Chevron />
          </SelectBox>
          <StatusDivider />
          <Coordinates>
            <Coordinate>X:<i>–</i></Coordinate>
            <Coordinate>Y:<i>–</i></Coordinate>
          </Coordinates>
          <StatusDivider />
          <Version>cSlope v0.1</Version>
        </StatusGroup>
      </StatusBar>

      <Overlay>
        <Dialog role="dialog" aria-labelledby="dialog-title">
          <DialogHeader>
            <h2 id="dialog-title">Sensitivity analysis</h2>
            <CloseButton aria-label="Close">×</CloseButton>
          </DialogHeader>
          <DialogBody>
            <Field>
              Vary
              <SelectBox $kind="field">
                <select defaultValue="g"><option value="g">M1: γ (kN/m³) (now 20)</option></select>
                <Chevron />
              </SelectBox>
            </Field>
            <FieldRow>
              <Field>From<TextInput defaultValue="16" /></Field>
              <Field>To<TextInput defaultValue="24" /></Field>
              <Field>Values<TextInput defaultValue="9" /></Field>
            </FieldRow>
            <Hint $small>Each value is a full analysis of the model as it is now, with the current search settings.</Hint>
            <ChartBox><SensitivityChart /></ChartBox>
            <ResultTable>
              <thead><tr><th>M1: γ (kN/m³)</th><th>FOS</th></tr></thead>
              <tbody>
                {results.map(([x, , label]) => (
                  <tr key={x}><td>{x}</td><td>{label}</td></tr>
                ))}
              </tbody>
            </ResultTable>
          </DialogBody>
          <DialogFooter>
            <FooterButton>Run</FooterButton>
            <FooterStatus>9 of 9 values gave a FOS</FooterStatus>
            <FooterButton>Export CSV</FooterButton>
            <FooterButton>CSV (; ,)</FooterButton>
          </DialogFooter>
        </Dialog>
      </Overlay>
    </Page>
  );
}
